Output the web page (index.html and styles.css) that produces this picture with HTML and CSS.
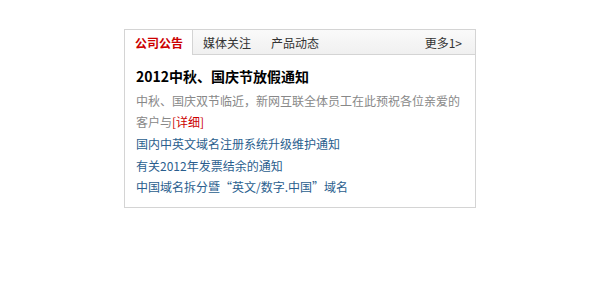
FILE: index.html
```html
<!DOCTYPE html>
<html lang="zh-CN">
<head>
    <meta charset="UTF-8">
    <title>公司公告</title>
    <link rel="stylesheet" href="styles.css">
</head>
<body>

    <div class="news-box">
        <!-- 标签栏 -->
        <div class="news-box__tabs">
            <a class="news-box__tab active" href="#">公司公告</a>
            <a class="news-box__tab" href="#">媒体关注</a>
            <a class="news-box__tab" href="#">产品动态</a>
            <a class="news-box__more" href="#">更多1&gt;</a>
        </div>

        <!-- 内容 -->
        <div class="news-box__body">
            <h3 class="news-box__title">2012中秋、国庆节放假通知</h3>
            <p class="news-box__summary">中秋、国庆双节临近，新网互联全体员工在此预祝各位亲爱的客户与<a href="#">[详细]</a></p>
            <ul class="news-box__list">
                <li><a href="#">国内中英文域名注册系统升级维护通知</a></li>
                <li><a href="#">有关2012年发票结余的通知</a></li>
                <li><a href="#">中国域名拆分暨“英文/数字.中国”域名</a></li>
            </ul>
        </div>
    </div>

</body>
</html>
```

FILE: styles.css
```css
body {
    margin: 0;
    padding-top: 29px;
    font-family: "Noto Sans CJK SC", "Microsoft YaHei", sans-serif;
    font-size: 12px;
    background: #fff;
}

a {
    text-decoration: none;
}

.news-box {
    width: 350px;
    height: 177px;
    margin: 0 auto;
    border: 1px solid #d4d4d4;
}

.news-box__tabs {
    display: flex;
    align-items: stretch;
    height: 24px;
    background: linear-gradient(#fafafa, #f0f0f0);
    border-bottom: 1px solid #d4d4d4;
}

.news-box__tab {
    display: flex;
    align-items: center;
    padding: 0 10px;
    color: #333;
    font-size: 12px;
    white-space: nowrap;
}

.news-box__tab.active {
    width: 48px;
    padding: 0 9px 0 10px;
    color: #c00;
    font-weight: bold;
    background: #fff;
    border-right: 1px solid #d4d4d4;
    margin-bottom: -1px;
}

.news-box__more {
    display: flex;
    align-items: center;
    margin-left: auto;
    padding-right: 13px;
    color: #333;
}

.news-box__body {
    padding: 11px 10px 0 11px;
}

.news-box__title {
    margin: 0 0 4px;
    font-size: 14px;
    font-weight: bold;
    color: #000;
    line-height: 20px;
}

.news-box__summary {
    margin: 0;
    color: #888;
    line-height: 21px;
}

.news-box__summary a {
    color: #c00;
}

.news-box__list {
    list-style: none;
    margin: 1px 0 0;
    padding: 0;
}

.news-box__list li {
    line-height: 21.5px;
}

.news-box__list a {
    color: #2a5e8e;
}
```
